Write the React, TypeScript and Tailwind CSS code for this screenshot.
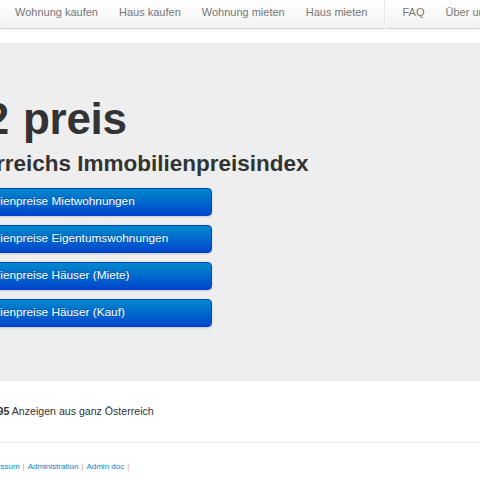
import React from "react"

const navLeft = ["Wohnung kaufen", "Haus kaufen", "Wohnung mieten", "Haus mieten"]
const navRight = ["FAQ", "Über uns"]

const buttons = [
  "Immobilienpreise Mietwohnungen",
  "Immobilienpreise Eigentumswohnungen",
  "Immobilienpreise Häuser (Miete)",
  "Immobilienpreise Häuser (Kauf)",
]

const footerLinks = ["Impressum", "Administration", "Admin doc"]

export default function App() {
  return (
    <div
      className="relative h-[480px] w-[480px] overflow-hidden bg-white text-[#333]"
      style={{ fontFamily: '"Liberation Sans", Arial, sans-serif' }}
    >
      {/* Navbar */}
      <div className="flex h-[29px] items-center border-b border-[#d4d4d4] bg-gradient-to-b from-white to-[#f2f2f2] pl-[4.5px] shadow-[0_1px_3px_rgba(0,0,0,0.06)]">
        <ul className="flex shrink-0 items-center whitespace-nowrap">
          {navLeft.map((item) => (
            <li key={item} className="px-[10.5px] pb-[3px] text-[11px] text-[#777]">
              {item}
            </li>
          ))}
          <li className="mx-[6px] h-[29px] w-[2px] border-l border-r border-l-[#e8e8e8] border-r-white" />
          {navRight.map((item) => (
            <li key={item} className="px-[10.5px] pb-[3px] text-[11px] text-[#777]">
              {item}
            </li>
          ))}
        </ul>
      </div>

      {/* Hero */}
      <div className="mt-[14px] bg-[#eeeeee] pb-[54px] pt-[54px]">
        <div className="ml-[-54px] w-[600px]">
          <h1 className="whitespace-nowrap text-[44px] font-bold leading-none tracking-[-0.3px] text-[#333]">
            m2<span className="ml-[14px]">preis</span>
          </h1>
          <p className="mt-[12px] whitespace-nowrap text-[22.5px] font-bold leading-none text-[#333]">
            Österreichs Immobilienpreisindex
          </p>
          <div className="mt-[12px] flex w-[266px] flex-col gap-[9px]">
            {buttons.map((label) => (
              <a
                key={label}
                className="flex h-[28px] items-center whitespace-nowrap rounded-[4px] border border-[#0044cc] bg-gradient-to-b from-[#0088cc] to-[#0044cc] pl-[12px] text-[11.8px] text-white shadow-[0_1px_2px_rgba(0,0,0,0.15)] [text-shadow:0_-1px_0_rgba(0,0,0,0.25)]"
              >
                {label}
              </a>
            ))}
          </div>
        </div>
      </div>

      {/* Listing count */}
      <div className="ml-[-23px] mt-[24px] whitespace-nowrap text-[10.6px] leading-[12px] text-[#333]">
        <b>12.395</b> Anzeigen aus ganz Österreich
      </div>

      <div className="mt-[25px] border-t border-[#e5e5e5]" />

      {/* Footer */}
      <div className="ml-[-20px] mt-[19px] flex items-center whitespace-nowrap text-[8px] leading-[10px]">
        {footerLinks.map((link) => (
          <React.Fragment key={link}>
            <a className="text-[#0088cc]">{link}</a>
            <span className="mx-[3px] text-[#e0a050]">|</span>
          </React.Fragment>
        ))}
      </div>
    </div>
  )
}
